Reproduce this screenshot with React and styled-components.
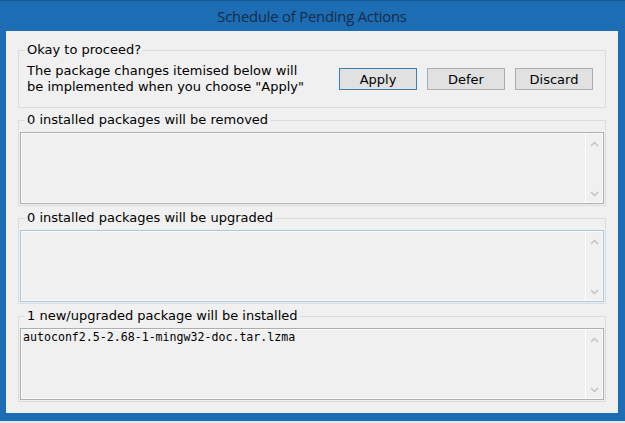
import React from 'react'
import styled, { createGlobalStyle } from 'styled-components'

const GlobalStyle = createGlobalStyle`
  html, body {
    margin: 0;
    padding: 0;
    background: #dce7f2;
  }
  * {
    box-sizing: border-box;
  }
`

const Window = styled.div`
  width: 625px;
  height: 421px;
  display: flex;
  flex-direction: column;
  background: #1c6db3;
  border-top: 1px solid #165a94;
  padding: 0 7px 8px 6px;
`

const TitleBar = styled.div`
  height: 30px;
  display: flex;
  align-items: center;
  justify-content: center;
  font-family: 'Open Sans', 'Noto Sans', sans-serif;
  font-size: 14.8px;
  letter-spacing: -0.2px;
  color: #182b47;
`

const Client = styled.div`
  flex: 1;
  background: #f0f0f0;
  padding: 11px 12px 0;
  display: flex;
  flex-direction: column;
  gap: 4px;
  font-family: 'DejaVu Sans', Tahoma, sans-serif;
  font-size: 13px;
  color: #000;
`

const Group = styled.fieldset`
  margin: 0;
  padding: 0 1px 1px;
  border: 1px solid #dcdcdc;
  min-width: 0;
`

const Legend = styled.legend`
  margin-left: 5px;
  padding: 0 2px;
  height: 16px;
  line-height: 16px;
`

const ProceedRow = styled.div`
  display: flex;
  align-items: center;
  justify-content: space-between;
  padding: 5px 11px 11px 7px;
`

const Message = styled.div`
  line-height: 16px;
`

const ButtonRow = styled.div`
  display: flex;
  gap: 10px;
`

const Button = styled.button`
  width: 78px;
  height: 22px;
  padding: 0;
  font: inherit;
  color: #000;
  background: #e1e1e1;
  border: 1px solid ${(p) => (p.$primary ? '#3c7fb1' : '#adadad')};
`

const ListBox = styled.div`
  margin-top: 4px;
  height: 72px;
  display: flex;
  border: 1px solid ${(p) => (p.$focused ? '#a6c6e4' : '#adadad')};
  box-shadow: inset 0 0 0 1px #fbfbfb;
  background: #f0f0f0;
`

const Items = styled.div`
  flex: 1;
  padding: 2px 2px;
  font-family: 'DejaVu Sans Mono', 'Liberation Mono', monospace;
  font-size: 11.6px;
  line-height: 13px;
`

const Scrollbar = styled.div`
  width: 18px;
  border-left: 1px solid #ffffff;
  display: flex;
  flex-direction: column;
  justify-content: space-between;
  align-items: center;
  padding: 8px 0 6px;
`

const Chevron = ({ down }) => (
  <svg width="9" height="6" viewBox="0 0 9 6">
    <path
      d={down ? 'M1 1 L4.5 4.5 L8 1' : 'M1 5 L4.5 1.5 L8 5'}
      fill="none"
      stroke="#c2c2c2"
      strokeWidth="1.4"
    />
  </svg>
)

const PackageList = ({ focused, items = [] }) => (
  <ListBox $focused={focused}>
    <Items>
      {items.map((it) => (
        <div key={it}>{it}</div>
      ))}
    </Items>
    <Scrollbar>
      <Chevron />
      <Chevron down />
    </Scrollbar>
  </ListBox>
)

const sections = [
  { title: '0 installed packages will be removed', items: [] },
  { title: '0 installed packages will be upgraded', items: [], focused: true },
  {
    title: '1 new/upgraded package will be installed',
    items: ['autoconf2.5-2.68-1-mingw32-doc.tar.lzma'],
  },
]

export default function App() {
  return (
    <>
      <GlobalStyle />
      <Window>
        <TitleBar>Schedule of Pending Actions</TitleBar>
        <Client>
          <Group>
            <Legend>Okay to proceed?</Legend>
            <ProceedRow>
              <Message>
                The package changes itemised below will
                <br />
                be implemented when you choose "Apply"
              </Message>
              <ButtonRow>
                <Button $primary>Apply</Button>
                <Button>Defer</Button>
                <Button>Discard</Button>
              </ButtonRow>
            </ProceedRow>
          </Group>
          {sections.map((s) => (
            <Group key={s.title}>
              <Legend>{s.title}</Legend>
              <PackageList focused={s.focused} items={s.items} />
            </Group>
          ))}
        </Client>
      </Window>
    </>
  )
}
